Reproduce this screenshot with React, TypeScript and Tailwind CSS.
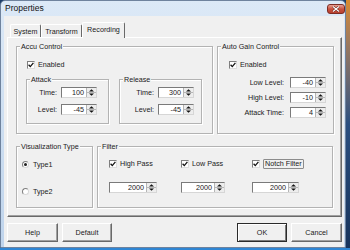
import React from "react";

type Kids = { children?: React.ReactNode };

function Group({ title, className, children }: { title: string; className: string } & Kids) {
  return (
    <div className={`border border-[#b3b3b3] shadow-[inset_1px_1px_0_#fff,1px_1px_0_#fff] ${className}`}>
      <div className="-mt-[5px] ml-[3px] w-fit bg-[#f0f0f0] px-[1px] leading-[9px]">{title}</div>
      {children}
    </div>
  );
}

function Check({ label, focus }: { label: string; focus?: boolean }) {
  return (
    <div className="flex h-[9px] items-center gap-[3px]">
      <span className="flex h-[8px] w-[8px] shrink-0 items-center justify-center border border-[#7f7f7f] border-b-[#dedede] border-r-[#dedede] bg-white">
        <svg width="6" height="6" viewBox="0 0 6 6">
          <path d="M0.6 2.7 2.3 4.6 5.4 0.9" fill="none" stroke="#111" strokeWidth="1.3" />
        </svg>
      </span>
      <span
        className={
          focus
            ? "rounded-[1px] border border-[#8c8c8c] px-[1px] leading-[8px]"
            : "leading-[9px]"
        }
      >
        {label}
      </span>
    </div>
  );
}

function Radio({ label, checked }: { label: string; checked?: boolean }) {
  return (
    <div className="flex h-[9px] items-center gap-[4px]">
      <span className="flex h-[7px] w-[7px] items-center justify-center rounded-full border border-[#7f7f7f] border-b-[#d8d8d8] border-r-[#d8d8d8] bg-white">
        {checked && <span className="h-[3px] w-[3px] rounded-full bg-[#222]" />}
      </span>
      <span className="leading-[9px]">{label}</span>
    </div>
  );
}

function Spin({ value, className }: { value: string; className: string }) {
  return (
    <div
      className={`flex h-[11px] border border-[#7a7a7a] border-b-[#d6d6d6] border-r-[#d6d6d6] bg-white ${className}`}
    >
      <span className="flex-1 pr-[2px] text-right leading-[9px]">{value}</span>
      <span className="flex w-[10px] items-center justify-center border-l border-[#b5b5b5] bg-[#ededed]">
        <svg width="9" height="9" viewBox="0 0 9 9">
          <path d="M2 3.6 4.5 1.2 7 3.6Z" fill="#111" />
          <path d="M2 5.4 4.5 7.8 7 5.4Z" fill="#111" />
          <path d="M0 4.5H9" stroke="#a8a8a8" strokeWidth="0.8" />
        </svg>
      </span>
    </div>
  );
}

function Row({ label, value, lw }: { label: string; value: string; lw: string }) {
  return (
    <div className="flex items-center gap-[4px]">
      <span className={`${lw} text-right leading-[9px]`}>{label}</span>
      <Spin value={value} className="w-[36px]" />
    </div>
  );
}

function AgcRow({ label, value }: { label: string; value: string }) {
  return (
    <div className="flex items-center gap-[6px]">
      <span className="leading-[9px]">{label}</span>
      <Spin value={value} className="w-[36px]" />
    </div>
  );
}

function Btn({ label, def, w }: { label: string; def?: boolean; w: string }) {
  const edge = def
    ? "border border-[#2a2a2a] shadow-[inset_1px_1px_0_#fff,inset_-1px_-1px_0_#7a7a7a]"
    : "border border-l-white border-t-white border-r-[#696969] border-b-[#696969] shadow-[inset_-1px_-1px_0_#a0a0a0]";
  return (
    <button className={`h-[19px] ${w} bg-[#f0f0f0] leading-none text-[#1a1a1a] ${edge}`}>{label}</button>
  );
}

function Tab({ label, w, active }: { label: string; w: string; active?: boolean }) {
  return (
    <div
      className={`flex ${w} items-center justify-center rounded-t-[2px] border-l border-t border-r border-l-white border-t-white border-r-[#696969] bg-[#f0f0f0] leading-[9px] ${
        active ? "relative z-10 -mb-px h-[16px] pb-[2px]" : "h-[13px]"
      }`}
    >
      {label}
    </div>
  );
}

export default function App() {
  return (
    <div className="flex h-[250px] w-[350px] flex-col overflow-hidden bg-[#1d3d69] font-['Liberation_Sans',Arial,sans-serif] text-[7.2px] text-[#1a1a1a]">
      <div className="flex h-[248px]">
        <div className="flex h-[248px] w-[346px] flex-col rounded-t-[5px] border border-[#6f839e] bg-gradient-to-b from-[#dce9f7] to-[#bfd4ec]">
          <div className="flex h-[15px] items-center justify-between pl-[4px]">
            <span className="text-[8.5px] leading-none text-[#111]">Properties</span>
            <span className="flex h-[10px] w-[18px] items-center justify-center rounded-[3px] border border-[#7c2c24] bg-gradient-to-b from-[#e8a093] via-[#c9523f] to-[#b8402f]">
              <svg width="8" height="6" viewBox="0 0 8 6">
                <path d="M1 0.5 7 5.5M7 0.5 1 5.5" stroke="#5a1a12" strokeWidth="2.2" />
                <path d="M1 0.5 7 5.5M7 0.5 1 5.5" stroke="#fff" strokeWidth="1.2" />
              </svg>
            </span>
          </div>

          <div className="ml-[3px] mr-px flex flex-1 flex-col bg-[#f0f0f0] pl-[3px] pr-[2px] pt-[6px]">
            <div className="flex h-[15px] items-end pl-[3px]">
              <Tab label="System" w="w-[31px]" />
              <Tab label="Transform" w="w-[41px]" />
              <Tab label="Recording" w="w-[43px]" active />
            </div>

            <div className="h-[180px] w-[335px] border border-l-white border-t-white border-r-[#696969] border-b-[#696969] shadow-[inset_-1px_-1px_0_#a0a0a0]">
              <div className="ml-[8px] mt-[8px] flex gap-[4px]">
                <Group title="Accu Control" className="h-[88px] w-[197px]">
                  <div className="ml-[10px] mt-[9px]">
                    <Check label="Enabled" />
                  </div>
                  <div className="ml-[9px] mt-[10px] flex gap-[10px]">
                    <Group title="Attack" className="h-[45px] w-[83px]">
                      <div className="mt-[3px] flex flex-col gap-[6px]">
                        <Row label="Time:" value="100" lw="w-[30px]" />
                        <Row label="Level:" value="-45" lw="w-[30px]" />
                      </div>
                    </Group>
                    <Group title="Release" className="h-[45px] w-[83px]">
                      <div className="mt-[3px] flex flex-col gap-[6px]">
                        <Row label="Time:" value="300" lw="w-[34px]" />
                        <Row label="Level:" value="-45" lw="w-[34px]" />
                      </div>
                    </Group>
                  </div>
                </Group>

                <Group title="Auto Gain Control" className="h-[88px] w-[117px]">
                  <div className="ml-[11px] mt-[9px]">
                    <Check label="Enabled" />
                  </div>
                  <div className="mt-[8px] flex flex-col items-end gap-[4px] pr-[7px]">
                    <AgcRow label="Low Level:" value="-40" />
                    <AgcRow label="High Level:" value="-10" />
                    <AgcRow label="Attack Time:" value="4" />
                  </div>
                </Group>
              </div>

              <div className="ml-[8px] mt-[12px] flex gap-[4px]">
                <Group title="Visualization Type" className="h-[62px] w-[77px]">
                  <div className="ml-[5px] mt-[9px]">
                    <Radio label="Type1" checked />
                  </div>
                  <div className="ml-[5px] mt-[18px]">
                    <Radio label="Type2" />
                  </div>
                </Group>

                <Group title="Filter" className="h-[62px] w-[236px]">
                  <div className="ml-[11px] mt-[8px] flex">
                    <div className="w-[72px]">
                      <Check label="High Pass" />
                    </div>
                    <div className="w-[71px]">
                      <Check label="Low Pass" />
                    </div>
                    <Check label="Notch Filter" focus />
                  </div>
                  <div className="ml-[11px] mt-[14px] flex">
                    <div className="w-[72px]">
                      <Spin value="2000" className="w-[48px]" />
                    </div>
                    <div className="w-[71px]">
                      <Spin value="2000" className="w-[44px]" />
                    </div>
                    <Spin value="2000" className="w-[47px]" />
                  </div>
                </Group>
              </div>
            </div>

            <div className="mt-[6px] flex justify-between">
              <div className="flex gap-[4px]">
                <Btn label="Help" w="w-[51px]" />
                <Btn label="Default" w="w-[50px]" />
              </div>
              <div className="flex gap-[4px]">
                <Btn label="OK" w="w-[50px]" def />
                <Btn label="Cancel" w="w-[51px]" />
              </div>
            </div>
          </div>
        </div>
        <div className="w-[4px] bg-gradient-to-b from-[#d98a2b] via-[#2b4f80] to-[#17345c]" />
      </div>
      <div className="h-[2px] bg-[#2f86d4]" />
    </div>
  );
}
